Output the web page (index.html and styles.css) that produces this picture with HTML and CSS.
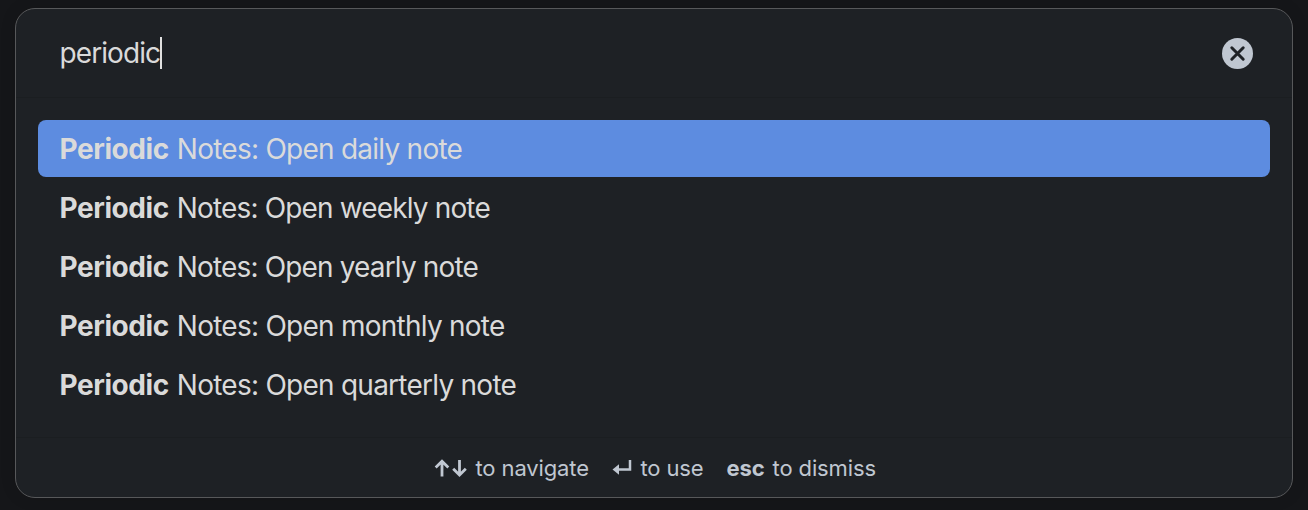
FILE: index.html
```html
<!DOCTYPE html>
<html lang="en">
<head>
<meta charset="utf-8">
<title>Command palette</title>
<link rel="stylesheet" href="styles.css">
</head>
<body>
<main class="palette">
  <header class="search">
    <div class="query"><span class="query-text">periodic</span><span class="caret"></span></div>
    <svg class="clear" width="32" height="32" viewBox="0 0 32 32" role="img" aria-label="Clear">
      <circle cx="15.500" cy="16.500" r="15.500" fill="#c0c7d1"/>
      <path d="M9.800 10.800l11.400 11.400M21.200 10.800L9.800 22.200" stroke="#1e2125" stroke-width="3" stroke-linecap="round"/>
    </svg>
  </header>
  <ul class="results">
    <li class="item selected"><b>Periodic</b><span>Notes: Open daily note</span></li>
    <li class="item tight"><b>Periodic</b><span>Notes: Open weekly note</span></li>
    <li class="item tight"><b>Periodic</b><span>Notes: Open yearly note</span></li>
    <li class="item"><b>Periodic</b><span>Notes: Open monthly note</span></li>
    <li class="item"><b>Periodic</b><span>Notes: Open quarterly note</span></li>
  </ul>
  <footer class="hints">
    <div class="hint navigate">
      <svg width="34" height="18" viewBox="0 0 34 18" fill="none" stroke="#c0c7d1" stroke-width="2.8">
        <path d="M8 17.500V2M1.700 8.500L8 2.200l6.300 6.300M25.500 1v15M19.200 9.700l6.300 6.300 6.300-6.300"/>
      </svg>
      <span>to navigate</span>
    </div>
    <div class="hint use">
      <svg width="20" height="18" viewBox="0 0 20 18">
        <path d="M18 1v9.500H5" fill="none" stroke="#c0c7d1" stroke-width="2.500"/>
        <path d="M.500 10.500l6.500-5.300v10.600z" fill="#c0c7d1"/>
      </svg>
      <span>to use</span>
    </div>
    <div class="hint dismiss"><b>esc</b><span>to dismiss</span></div>
  </footer>
</main>
</body>
</html>
```
FILE: styles.css
```css
* { box-sizing: border-box; }
body {
  margin: 0;
  padding: 8px 15px 12px;
  height: 510px;
  overflow: hidden;
  background: #151619;
  color: #dadada;
  font-family: Inter, "Liberation Sans", sans-serif;
}
.palette {
  height: 490px;
  display: flex;
  flex-direction: column;
  background: #1e2125;
  border: 1px solid #57585a;
  border-radius: 20px;
  box-shadow: 0 0 16px rgba(0, 0, 0, .12);
}
.search {
  height: 89px;
  flex: none;
  display: flex;
  align-items: center;
  justify-content: space-between;
  padding: 0 38px 0 44px;
  border-bottom: 1px solid #1b1e21;
}
.query { display: flex; align-items: center; font-size: 28px; font-weight: 430; }
.query-text { letter-spacing: -.92px; margin-left: -.5px; }
.caret { width: 2px; height: 32px; background: #e0e0e0; }
.clear { display: block; }
.results {
  flex: 1;
  margin: 0;
  padding: 22px;
  list-style: none;
  display: flex;
  flex-direction: column;
  gap: 2.2px;
}
.item {
  height: 57px;
  flex: none;
  display: flex;
  align-items: center;
  gap: 8px;
  padding: 0 22px;
  border-radius: 8px;
  font-size: 28px;
  font-weight: 430;
  letter-spacing: -.75px;
  white-space: nowrap;
}
.tight { letter-spacing: -.85px; }
.item b { font-weight: 700; letter-spacing: -.42px; margin-left: -.5px; }
.selected { background: #5d8ce0; }
.hints {
  height: 60px;
  flex: none;
  display: flex;
  align-items: center;
  padding-left: 417.5px;
  gap: 23px;
  border-top: 1px solid #1b1e21;
  color: #c0c7d1;
  font-size: 22px;
  font-weight: 430;
  letter-spacing: -.12px;
  white-space: nowrap;
}
.hint { display: flex; align-items: center; gap: 8px; }
.use { gap: 8.5px; }
```
